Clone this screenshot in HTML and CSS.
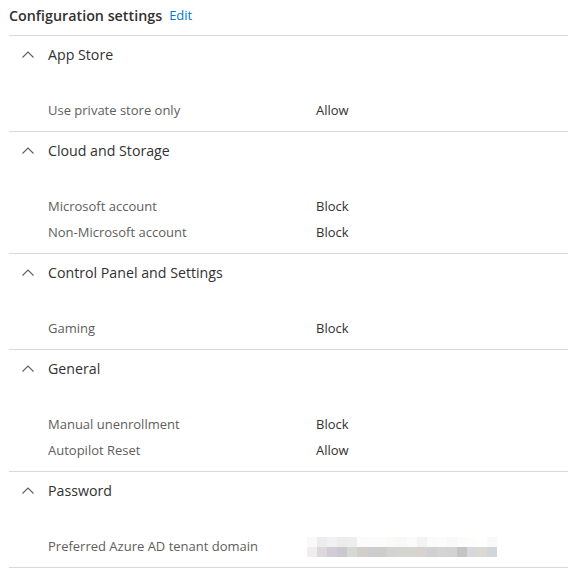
FILE: index.html
```html
<!DOCTYPE html>
<html>
<head>
<meta charset="utf-8">
<link rel="stylesheet" href="styles.css">
</head>
<body>
<div class="page">
  <div class="title-row">
    <span class="title">Configuration settings</span>
    <a class="edit">Edit</a>
  </div>

  <section class="group">
    <div class="group-head"><svg class="chev" viewBox="0 0 12 8"><path d="M0.5 7.5 L6 2 L11.5 7.5"/></svg><span>App Store</span></div>
    <div class="rows">
      <div class="row"><span class="label">Use private store only</span><span class="value">Allow</span></div>
    </div>
  </section>

  <section class="group">
    <div class="group-head"><svg class="chev" viewBox="0 0 12 8"><path d="M0.5 7.5 L6 2 L11.5 7.5"/></svg><span>Cloud and Storage</span></div>
    <div class="rows">
      <div class="row"><span class="label">Microsoft account</span><span class="value">Block</span></div>
      <div class="row"><span class="label">Non-Microsoft account</span><span class="value">Block</span></div>
    </div>
  </section>

  <section class="group">
    <div class="group-head"><svg class="chev" viewBox="0 0 12 8"><path d="M0.5 7.5 L6 2 L11.5 7.5"/></svg><span>Control Panel and Settings</span></div>
    <div class="rows">
      <div class="row"><span class="label">Gaming</span><span class="value">Block</span></div>
    </div>
  </section>

  <section class="group">
    <div class="group-head"><svg class="chev" viewBox="0 0 12 8"><path d="M0.5 7.5 L6 2 L11.5 7.5"/></svg><span>General</span></div>
    <div class="rows">
      <div class="row"><span class="label">Manual unenrollment</span><span class="value">Block</span></div>
      <div class="row"><span class="label">Autopilot Reset</span><span class="value">Allow</span></div>
    </div>
  </section>

  <section class="group last">
    <div class="group-head"><svg class="chev" viewBox="0 0 12 8"><path d="M0.5 7.5 L6 2 L11.5 7.5"/></svg><span>Password</span></div>
    <div class="rows">
      <div class="row"><span class="label">Preferred Azure AD tenant domain</span>
        <span class="value blurred" aria-label="redacted">
          <span class="px-row">
            <i style="background:#f9f9f9"></i><i style="background:#ececec"></i><i style="background:#f1f1f3"></i><i style="background:#ececec"></i><i style="background:#ededed"></i><i style="background:#fbfbfb"></i><i style="background:#fcfcfc"></i><i style="background:#fcfcfc"></i><i style="background:#f9f9f7"></i><i style="background:#f8f8f8"></i><i style="background:#fbfbfb"></i><i style="background:#f3f3f3"></i><i style="background:#fbfbfa"></i><i style="background:#fcfcfc"></i><i style="background:#f9f9f9"></i><i style="background:#fcfcfc"></i><i style="background:#fdfdfb"></i><i style="background:#fefefd"></i><i style="background:#f8f9f9"></i>
          </span>
          <span class="px-row">
            <i style="background:#efeeec"></i><i style="background:#dcd9dc"></i><i style="background:#d0ccd3"></i><i style="background:#cbc8d0"></i><i style="background:#d6d8d6"></i><i style="background:#d2cfca"></i><i style="background:#cdcdd0"></i><i style="background:#cfcdcc"></i><i style="background:#d3d4d2"></i><i style="background:#d4d4d0"></i><i style="background:#d4d5d1"></i><i style="background:#d6d2ce"></i><i style="background:#cfd0d4"></i><i style="background:#d4d3d3"></i><i style="background:#d2d2d2"></i><i style="background:#c4c4c4"></i><i style="background:#d7d8db"></i><i style="background:#dcd9d2"></i><i style="background:#d0d6da"></i>
          </span>
        </span>
      </div>
    </div>
  </section>
</div>
</body>
</html>
```

FILE: styles.css
```css
html, body {
  margin: 0;
  padding: 0;
  background: #ffffff;
}

body {
  font-family: "Open Sans", "Noto Sans", "Liberation Sans", sans-serif;
  color: #323130;
}

.page {
  padding-left: 9px;
}

.title-row {
  display: flex;
  align-items: center;
  gap: 7px;
  margin-top: -5px;
  height: 40px;
}

.title {
  font-size: 14.3px;
  font-weight: 600;
  color: #323130;
}

.edit {
  font-size: 13px;
  color: #0078d4;
  cursor: pointer;
}

.group {
  border-top: 1px solid #d9d9d9;
  padding-bottom: 8px;
}

.group.last {
  border-bottom: 1px solid #d9d9d9;
}

.group-head {
  height: 36px;
  display: flex;
  align-items: center;
  font-size: 14.2px;
  color: #323130;
}

.chev {
  width: 12px;
  height: 8px;
  margin-left: 13px;
  margin-right: 14px;
  fill: none;
  stroke: #605e5c;
  stroke-width: 1.1;
}

.rows {
  padding-top: 25px;
}

.row {
  height: 26px;
  display: flex;
  align-items: center;
  font-size: 13px;
}

.label {
  width: 268px;
  padding-left: 39px;
  color: #605e5c;
}

.value {
  color: #323130;
}

.blurred {
  display: flex;
  flex-direction: column;
  margin-left: -9px;
  margin-top: 1px;
}

.px-row {
  display: flex;
}

.px-row i {
  display: block;
  width: 10px;
  height: 10px;
}
```
